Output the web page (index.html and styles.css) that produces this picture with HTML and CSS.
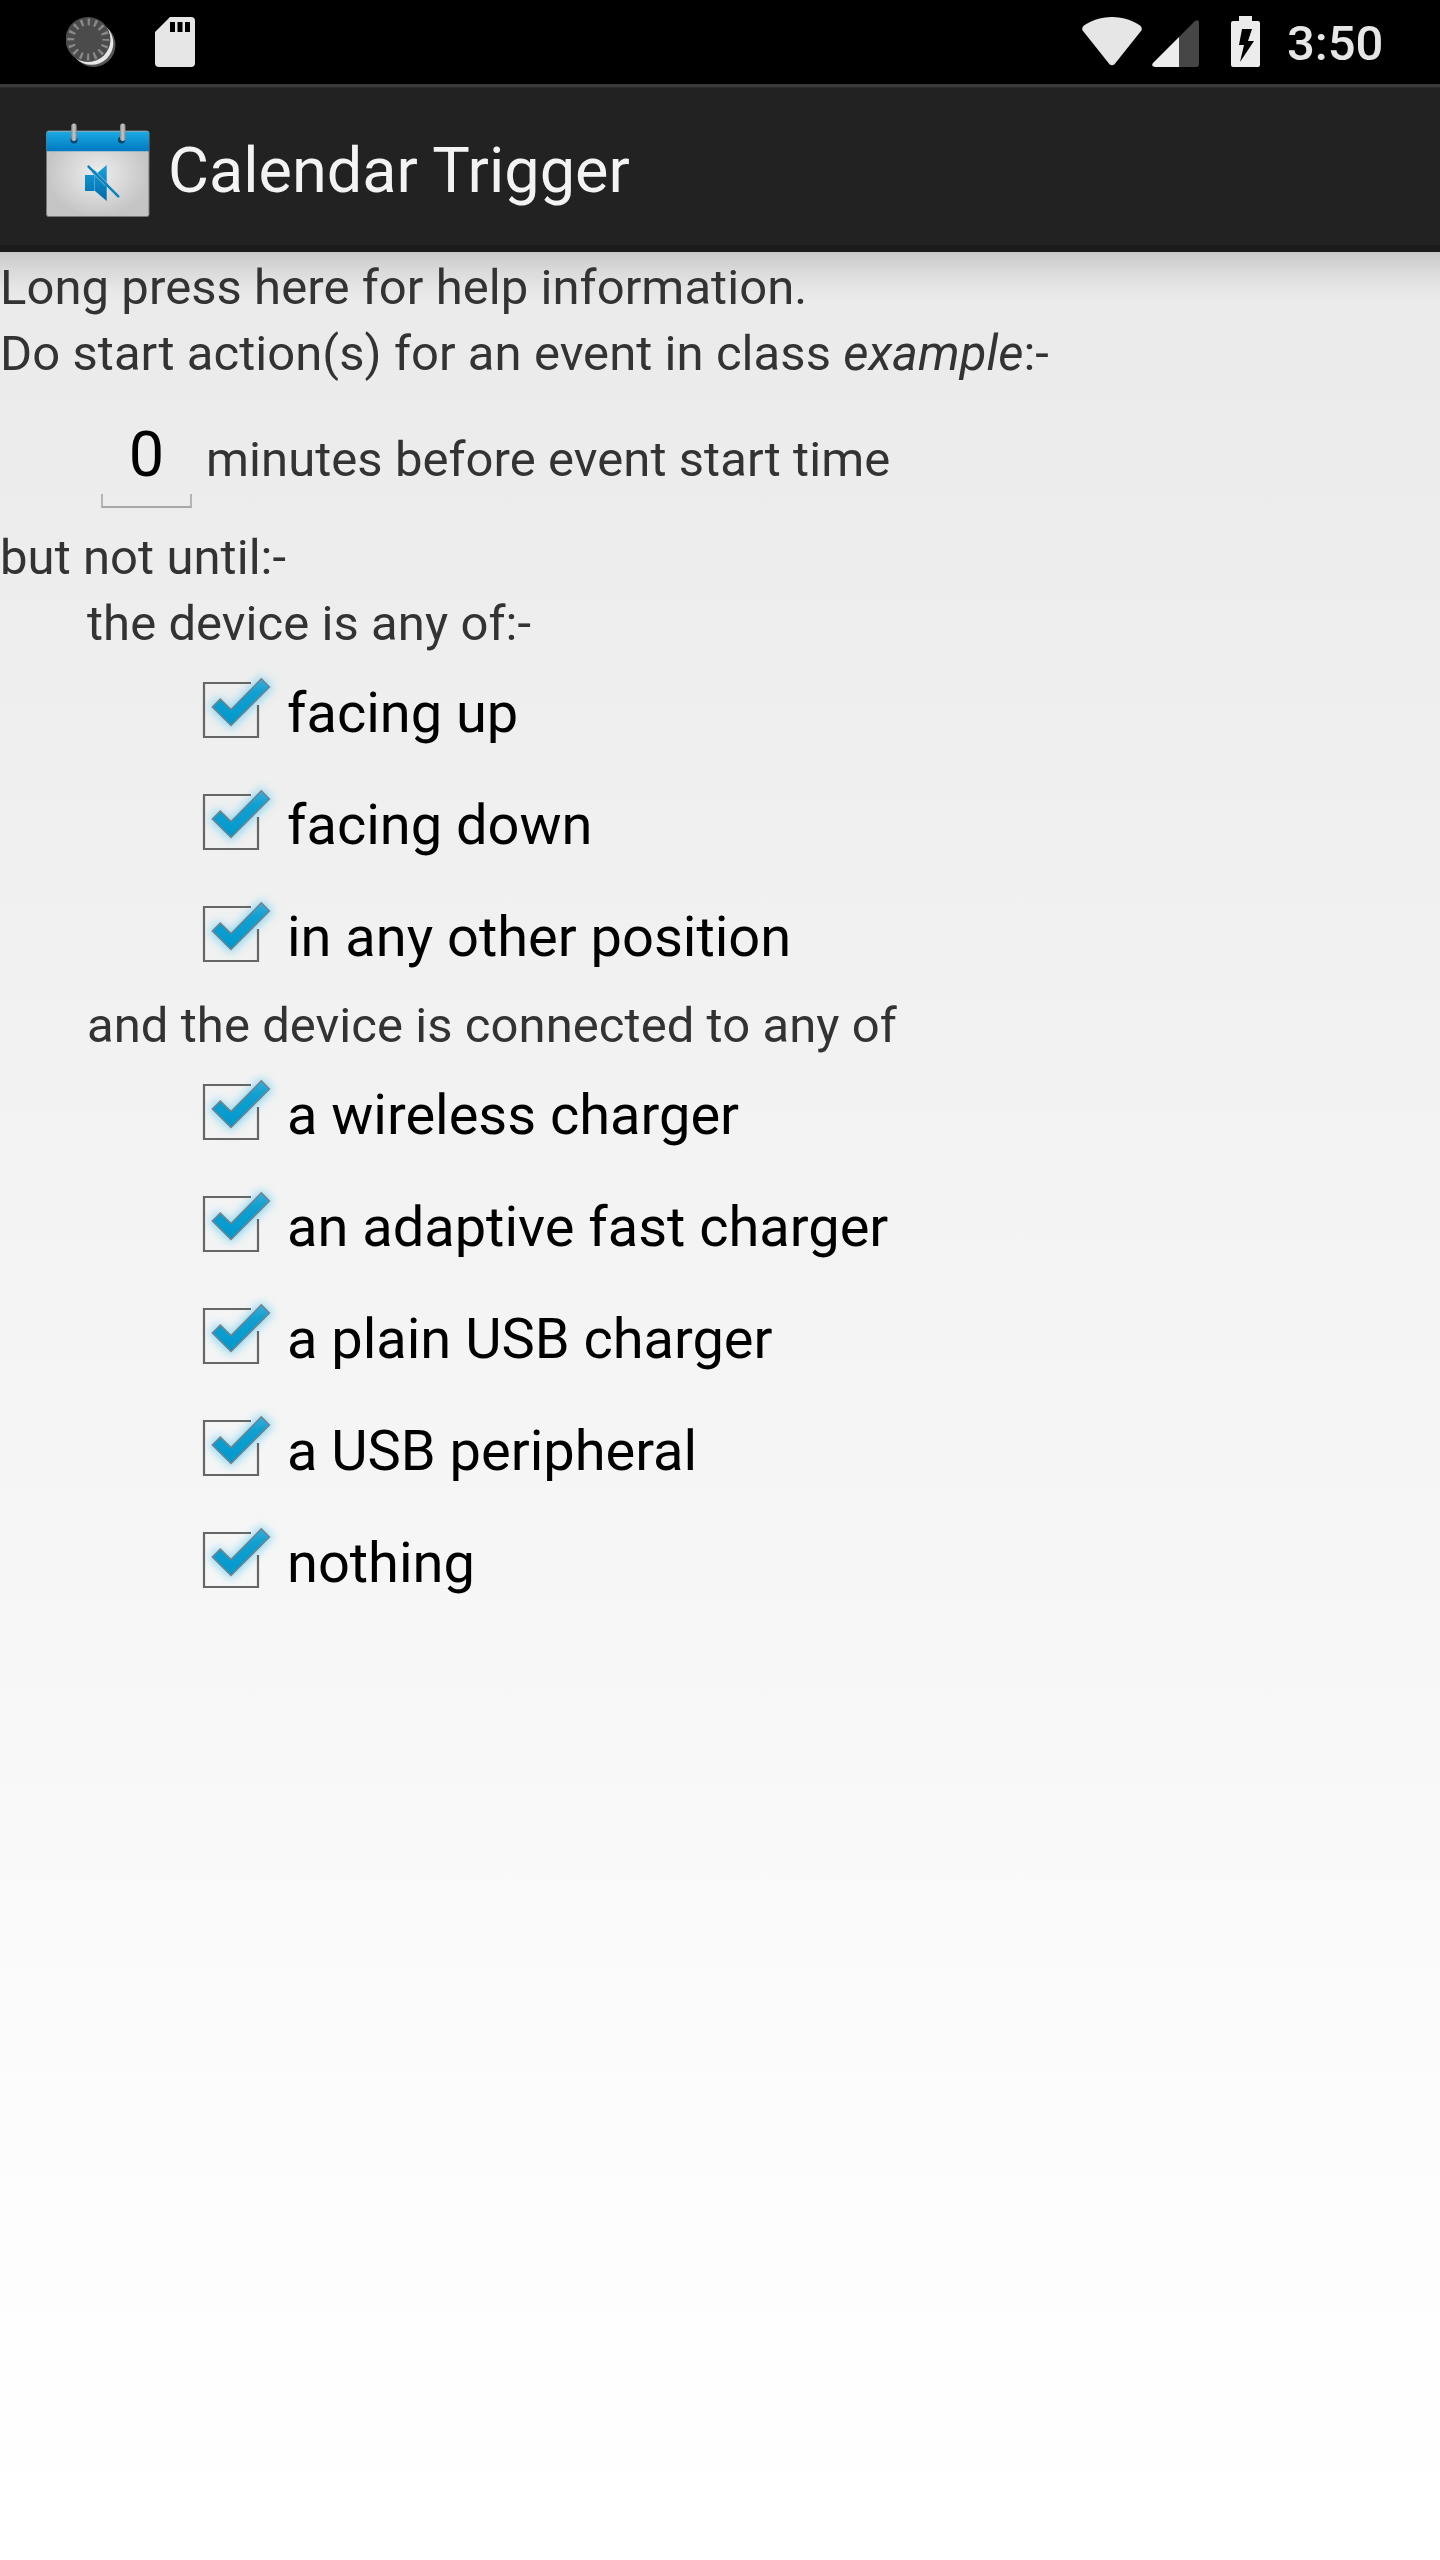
FILE: index.html
```html
<!DOCTYPE html>
<html lang="en">
<head>
<meta charset="utf-8">
<title>Calendar Trigger</title>
<link rel="stylesheet" href="styles.css">
</head>
<body>
<svg class="defs" width="0" height="0" aria-hidden="true">
  <defs>
    <linearGradient id="tick" x1="0" y1="0" x2="0" y2="1"><stop offset="0" stop-color="#35addb"/><stop offset=".3" stop-color="#129fd1"/><stop offset="1" stop-color="#0099cc"/></linearGradient>
    <filter id="glow" x="-40%" y="-40%" width="180%" height="180%"><feGaussianBlur stdDeviation="5"/></filter>
    <g id="cb">
      <path d="M18 37l7-7 11 11 31-32 9 8-39 39z" fill="#7fd3f2" stroke="#8fd8f3" stroke-width="5" filter="url(#glow)"/>
      <path d="M57 13H10V67H64V35" fill="none" stroke="#666" stroke-width="2.200"/>
      <path d="M18.300 37l8-8L37 39.500 67.300 8.800 75.500 17 37 55.500z" fill="url(#tick)" stroke="#758187" stroke-width="1.400"/>
    </g>
  </defs>
</svg>
<div class="screen">
  <header class="status">
    <div class="group">
      <svg class="spinner" width="50" height="50" viewBox="0 0 50 50">
        <circle cx="27.500" cy="28" r="22" fill="#555"/>
        <circle cx="25.500" cy="26" r="21.800" fill="#e8e8e8"/>
        <circle cx="22" cy="22.500" r="22.500" fill="#4b4b4b"/>
        <circle cx="22.300" cy="22.500" r="17.500" fill="none" stroke="#888" stroke-width="7" stroke-dasharray="2.400 4.470" stroke-dashoffset="1.200"/>
      </svg>
      <svg class="sd" width="40" height="50" viewBox="0 0 40 50">
        <path d="M15 0H36Q40 0 40 4V46Q40 50 36 50H4Q0 50 0 46V15z" fill="#e6e6e6"/>
        <path d="M15 5h5v10h-5zM22.500 5h5v10h-5zM30 5h5v10h-5z" fill="#000"/>
      </svg>
    </div>
    <div class="group">
      <svg class="wifi" width="60" height="49" viewBox="0 0 60 49"><path d="M30 0C42 0 51 4 58 8.500Q61 11 59 14L32.500 47.200Q30 49.500 27.500 47.200L1 14Q-1 11 2 8.500C9 4 18 0 30 0z" fill="#e6e6e6"/></svg>
      <svg class="cell" width="47" height="47" viewBox="0 0 47 47"><path d="M27 17L43 1Q47-1 47 3V44Q47 47 44 47H27z" fill="#464646"/><path d="M27 17V47H3Q-1.500 46.500 1 43z" fill="#ececec"/></svg>
      <svg class="battery" width="29" height="51" viewBox="0 0 29 51"><path d="M8 0h13v5h6q2 0 2 2v42q0 2-2 2H2q-2 0-2-2V7q0-2 2-2h6z" fill="#ececec"/><path d="M11 13h10l-4 12h6L9 46l4-17H8z" fill="#000"/></svg>
      <span class="clock">3:50</span>
    </div>
  </header>
  <div class="bar">
    <svg class="logo" width="106" height="96" viewBox="0 0 106 96">
      <defs>
        <linearGradient id="blue" x1="0" y1="0" x2="0" y2="1"><stop offset="0" stop-color="#1babe4"/><stop offset="1" stop-color="#0079c1"/></linearGradient>
        <radialGradient id="paper"><stop offset="0" stop-color="#eee"/><stop offset="1" stop-color="#c5c5c5"/></radialGradient>
        <linearGradient id="speaker" x1="0" y1="0" x2="0" y2="1"><stop offset="0" stop-color="#18a2dc"/><stop offset="1" stop-color="#0069a8"/></linearGradient>
        <linearGradient id="ring"><stop offset="0" stop-color="#888"/><stop offset=".5" stop-color="#c9c9c9"/><stop offset="1" stop-color="#888"/></linearGradient>
      </defs>
      <rect x="1.500" y="8" width="102.500" height="85.500" rx="2" fill="url(#paper)" stroke="#777"/>
      <path d="M1.500 28.300V10q0-2 2-2h98.500q2 0 2 2v18.300z" fill="url(#blue)"/>
      <path d="M3 8.500h99" stroke="#7ba9bd"/>
      <circle cx="29" cy="17" r="3.500" fill="#06456b"/><circle cx="76.500" cy="17" r="3.500" fill="#06456b"/>
      <rect x="26.200" y="0.500" width="5.500" height="17.500" rx="2.700" fill="url(#ring)"/><rect x="75" y="0.500" width="5.500" height="17.500" rx="2.700" fill="url(#ring)"/>
      <path d="M40 52h10L61.700 42V78L50 68H40z" fill="url(#speaker)"/>
      <path d="M49.500 52v16" stroke="#45a9d1"/>
      <path d="M48 48.200L61.500 61.700" stroke="#76b5d5" stroke-width="4"/>
      <path d="M43.500 43.700L73.300 73.300" stroke="#0b83bc" stroke-width="2.500" stroke-linecap="round"/>
    </svg>
    <h1 class="title">Calendar Trigger</h1>
  </div>
  <main class="content">
    <p class="line">Long press here for help information.</p>
    <p class="line">Do start action(s) for an event in class <i>example</i>:-</p>
    <div class="minutes"><span class="field">0</span><span class="after">minutes before event start time</span></div>
    <p class="line">but not until:-</p>
    <p class="line indent">the device is any of:-</p>
    <ul class="options">
      <li class="option"><svg class="box"><use href="#cb"/></svg><span>facing up</span></li>
      <li class="option"><svg class="box"><use href="#cb"/></svg><span>facing down</span></li>
      <li class="option"><svg class="box"><use href="#cb"/></svg><span>in any other position</span></li>
    </ul>
    <p class="line indent">and the device is connected to any of</p>
    <ul class="options">
      <li class="option"><svg class="box"><use href="#cb"/></svg><span>a wireless charger</span></li>
      <li class="option"><svg class="box"><use href="#cb"/></svg><span>an adaptive fast charger</span></li>
      <li class="option"><svg class="box"><use href="#cb"/></svg><span>a plain USB charger</span></li>
      <li class="option"><svg class="box"><use href="#cb"/></svg><span>a USB peripheral</span></li>
      <li class="option"><svg class="box"><use href="#cb"/></svg><span>nothing</span></li>
    </ul>
  </main>
</div>
</body>
</html>
```
FILE: styles.css
```css
body { margin: 0; font-family: Roboto, sans-serif; }
.defs { display: block; position: absolute; }
.screen { width: 1440px; height: 2560px; display: flex; flex-direction: column; overflow: hidden; background: #fff; }
.status { height: 84px; flex: none; background: #000; display: flex; justify-content: space-between; }
.group { display: flex; align-items: flex-start; }
.spinner { margin: 17px 0 0 66px; }
.sd { margin: 17px 0 0 39px; }
.wifi { margin-top: 17px; }
.cell { margin: 20px 0 0 10px; }
.battery { margin: 16px 0 0 32px; }
.clock { width: 153px; margin-left: 27px; font-size: 49px; font-weight: 500; line-height: 58px; margin-top: 15px; color: #e6e6e6; }
.bar { height: 168px; flex: none; box-sizing: border-box; padding-left: 45px; display: flex; align-items: center; gap: 17px; background: linear-gradient(#393939 0 3px, #2b2b2b 3px 4px, #222 4px 161px, #1b1b1b 161px); }
.logo { flex: none; margin-top: 6px; }
.title { margin: 0; padding-top: 5px; font-size: 63px; font-weight: 400; line-height: 74px; color: #f3f3f3; }
.content { flex: 1; color: #333; font-size: 49px; background: linear-gradient(rgba(0,0,0,.15), rgba(0,0,0,.08) 16px, rgba(0,0,0,.02) 36px, transparent 50px), linear-gradient(#eaeaea, #f2f2f2 800px, #f6f6f6 1300px, #fbfbfb 1766px, #fdfdfd 1980px, #fff); }
.line { margin: 0; height: 61px; padding-top: 5px; line-height: 62px; white-space: pre; letter-spacing: .06px; }
.indent { padding-left: 87px; }
.minutes { height: 138px; display: flex; padding-left: 101px; }
.field { box-sizing: border-box; width: 91px; height: 14px; margin-top: 110px; border: 2px solid #b5b5b5; border-top: 0; border-bottom-color: #a8a8a8; display: flex; align-items: flex-end; justify-content: center; font-size: 63px; line-height: 79px; color: #000; padding-bottom: 12px; }
.after { margin-left: 14px; padding-top: 45px; line-height: 62px; letter-spacing: .06px; }
.options { list-style: none; margin: 0; padding: 0 0 0 194px; color: #000; font-size: 56px; }
.option { height: 112px; display: flex; align-items: center; line-height: 66px; letter-spacing: -.02px; }
.option span { padding-top: 5px; }
.box { width: 93px; height: 80px; flex: none; overflow: visible; }
```
